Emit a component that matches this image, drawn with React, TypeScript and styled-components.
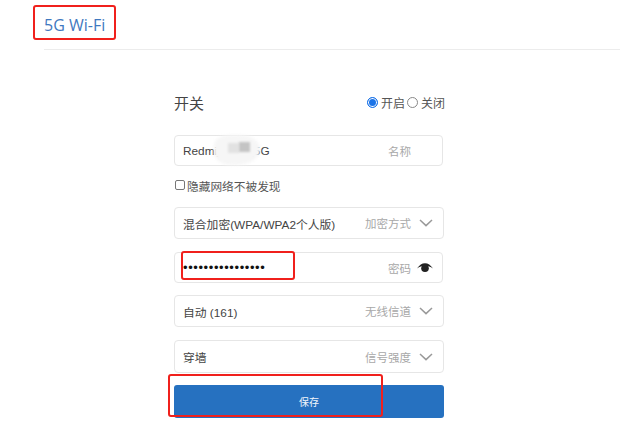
import React from "react";
import styled, { createGlobalStyle } from "styled-components";

const GlobalStyle = createGlobalStyle`
  html, body {
    margin: 0;
    padding: 0;
    background: #fff;
    overflow: hidden;
  }
  body {
    font-family: "Liberation Sans", "Noto Sans CJK SC", sans-serif;
  }
`;

const Page = styled.div`
  position: relative;
  width: 620px;
  height: 427px;
  overflow: hidden;
  padding-top: 1px;
  box-sizing: border-box;
`;

const Header = styled.div`
  margin-left: 44px;
  height: 48px;
  display: flex;
  align-items: center;
  border-bottom: 1px solid #ececec;
`;

const Title = styled.h1`
  margin: 0;
  font-family: "Open Sans", "Liberation Sans", sans-serif;
  font-size: 16px;
  font-weight: 400;
  color: #3f78c0;
`;

const Form = styled.form`
  width: 270px;
  margin: 38px 0 0 174px;
  display: flex;
  flex-direction: column;
`;

const SwitchRow = styled.div`
  height: 28px;
  display: flex;
  align-items: center;
  justify-content: space-between;
  margin-bottom: 19px;
`;

const SwitchLabel = styled.span`
  font-size: 15px;
  color: #444;
`;

const RadioGroup = styled.div`
  display: flex;
  align-items: center;
  margin-right: -1px;
  font-size: 12px;
  color: #555;
`;

const Radio = styled.span<{ checked?: boolean }>`
  width: 11px;
  height: 11px;
  box-sizing: border-box;
  margin: 0 3px 0 2px;
  border-radius: 50%;
  border: ${(props) => (props.checked ? "1px solid #1a73e8" : "1px solid #888")};
  background: ${(props) => (props.checked ? "#1a73e8" : "#fff")};
  box-shadow: ${(props) => (props.checked ? "inset 0 0 0 1px #fff" : "none")};
`;

const Field = styled.div<{ $height: number; $gap: number; $narrow?: boolean }>`
  height: ${(props) => props.$height}px;
  margin-bottom: ${(props) => props.$gap}px;
  margin-right: ${(props) => (props.$narrow ? 1 : 0)}px;
  box-sizing: border-box;
  padding: 0 10px 0 8px;
  display: flex;
  align-items: center;
  border: 1px solid #e6e6e6;
  border-radius: 4px;
  font-size: 11.8px;
  color: #444;
`;

const FieldValue = styled.span`
  flex: 1;
`;

const PasswordDots = styled.span`
  flex: 1;
  font-size: 13px;
  letter-spacing: 0.6px;
  color: #111;
`;

const FieldHint = styled.span`
  font-size: 11.5px;
  color: #a8a8a8;
`;

const NameHint = styled(FieldHint)`
  margin-right: 21px;
`;

const Chevron = styled.svg`
  width: 14px;
  height: 8px;
  margin-left: 8px;
  flex-shrink: 0;
`;

const Eye = styled.svg`
  width: 16px;
  height: 10px;
  margin: 0 -1px 0 6px;
  flex-shrink: 0;
`;

const CheckRow = styled.label`
  height: 20px;
  margin: 9px 0 12px;
  display: flex;
  align-items: center;
  font-size: 11.7px;
  color: #555;
`;

const CheckBox = styled.span`
  width: 10px;
  height: 10px;
  box-sizing: border-box;
  margin: 0 2px 0 1px;
  border: 1px solid #777;
  border-radius: 2px;
  background: #fff;
`;

const SaveButton = styled.button`
  height: 33px;
  margin-top: 12px;
  padding: 0;
  border: 0;
  border-radius: 3px;
  background: #2671c0;
  color: #f2f6fb;
  font-family: inherit;
  font-size: 10px;
`;

const Mark = styled.div<{ $x: number; $y: number; $w: number; $h: number }>`
  position: absolute;
  left: ${(props) => props.$x}px;
  top: ${(props) => props.$y}px;
  width: ${(props) => props.$w}px;
  height: ${(props) => props.$h}px;
  box-sizing: border-box;
  border: 2.5px solid #f0201c;
  border-radius: 3px;
`;

const BlurPatch = styled.div`
  position: absolute;
  left: 214px;
  top: 135px;
  width: 46px;
  height: 30px;
  border-radius: 35% 45% 50% 40%;
  background: #f6f6f6;
  filter: blur(1.5px);
`;

const BlurTile = styled.div<{ $x: number; $y: number; $shade: string }>`
  position: absolute;
  left: ${(props) => props.$x}px;
  top: ${(props) => props.$y}px;
  width: 11px;
  height: 10px;
  background: ${(props) => props.$shade};
  filter: blur(0.8px);
`;

const ChevronDown = () => (
  <Chevron viewBox="0 0 14 8">
    <path d="M1 1l6 5.6L13 1" fill="none" stroke="#999" strokeWidth="1.5" />
  </Chevron>
);

const EyeIcon = () => (
  <Eye viewBox="0 0 16 10">
    <path d="M0 5.500C2.500 2 5 .3 8 .3s5.500 1.700 8 5.200C13.500 3.600 11 2.800 8 2.800S2.500 3.600 0 5.500z" fill="#222" />
    <circle cx="8" cy="5.300" r="3.800" fill="#222" />
  </Eye>
);

const App = () => (
  <Page>
    <GlobalStyle />
    <Header>
      <Title>5G Wi-Fi</Title>
    </Header>
    <Form>
      <SwitchRow>
        <SwitchLabel>开关</SwitchLabel>
        <RadioGroup>
          <Radio checked />
          开启
          <Radio />
          关闭
        </RadioGroup>
      </SwitchRow>
      <Field $height={31} $gap={0} $narrow>
        <FieldValue>Redmi_XXX_5G</FieldValue>
        <NameHint>名称</NameHint>
      </Field>
      <CheckRow>
        <CheckBox />
        隐藏网络不被发现
      </CheckRow>
      <Field $height={32} $gap={13}>
        <FieldValue>混合加密(WPA/WPA2个人版)</FieldValue>
        <FieldHint>加密方式</FieldHint>
        <ChevronDown />
      </Field>
      <Field $height={31} $gap={12} $narrow>
        <PasswordDots>••••••••••••••••</PasswordDots>
        <FieldHint>密码</FieldHint>
        <EyeIcon />
      </Field>
      <Field $height={32} $gap={13}>
        <FieldValue>自动 (161)</FieldValue>
        <FieldHint>无线信道</FieldHint>
        <ChevronDown />
      </Field>
      <Field $height={33} $gap={0}>
        <FieldValue>穿墙</FieldValue>
        <FieldHint>信号强度</FieldHint>
        <ChevronDown />
      </Field>
      <SaveButton type="button">保存</SaveButton>
    </Form>
    <BlurPatch />
    <BlurTile $x={228} $y={143} $shade="#e2e2e2" />
    <BlurTile $x={239} $y={142} $shade="#c4c4c4" />
    <Mark $x={33} $y={5} $w={83} $h={35} />
    <Mark $x={181} $y={251} $w={114} $h={29} />
    <Mark $x={168} $y={374} $w={215} $h={43} />
  </Page>
);

export default App;
